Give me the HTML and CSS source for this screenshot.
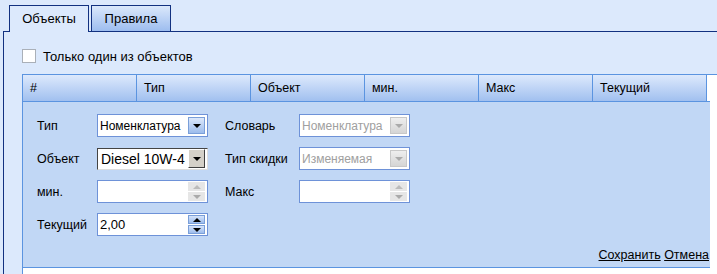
FILE: index.html
```html
<!DOCTYPE html>
<html lang="ru">
<head>
  <meta charset="UTF-8">
  <title>Объекты</title>
  <link rel="stylesheet" href="styles.css">
</head>
<body>

  <!-- Tabs -->
  <div class="tabs">
    <div class="tab active">Объекты</div>
    <div class="tab">Правила</div>
  </div>

  <div class="panel">
    <label class="check-row"><span class="checkbox"></span>Только один из объектов</label>

    <div class="grid">
      <div class="grid-head">
        <div class="hcell">#</div>
        <div class="hcell">Тип</div>
        <div class="hcell">Объект</div>
        <div class="hcell">мин.</div>
        <div class="hcell">Макс</div>
        <div class="hcell">Текущий</div>
      </div>

      <!-- Edit row -->
      <div class="edit-form">
        <div class="fields">
          <span class="lbl">Тип</span>
          <div class="combo"><span class="val">Номенклатура</span><span class="btn"><i class="arr-down"></i></span></div>
          <span class="lbl">Словарь</span>
          <div class="combo disabled"><span class="val">Номенклатура</span><span class="btn"><i class="arr-down"></i></span></div>

          <span class="lbl">Объект</span>
          <div class="combo focused"><span class="val">Diesel 10W-4</span><span class="btn"><i class="arr-down"></i></span></div>
          <span class="lbl">Тип скидки</span>
          <div class="combo disabled"><span class="val">Изменяемая</span><span class="btn"><i class="arr-down"></i></span></div>

          <span class="lbl">мин.</span>
          <div class="spin disabled"><span class="val"></span><span class="spin-btns"><span><i class="arr-up"></i></span><span><i class="arr-down"></i></span></span></div>
          <span class="lbl">Макс</span>
          <div class="spin disabled"><span class="val"></span><span class="spin-btns"><span><i class="arr-up"></i></span><span><i class="arr-down"></i></span></span></div>

          <span class="lbl">Текущий</span>
          <div class="spin"><span class="val num">2,00</span><span class="spin-btns"><span><i class="arr-up"></i></span><span><i class="arr-down"></i></span></span></div>
        </div>
        <div class="actions">
          <a href="#">Сохранить</a> <a href="#">Отмена</a>
        </div>
      </div>
    </div>
  </div>

</body>
</html>
```

FILE: styles.css
```css
body {
  margin: 0;
  background: #dce9fc;
  font-family: "Liberation Sans", Arial, sans-serif;
  font-size: 12.5px;
  color: #000;
  overflow: hidden;
  height: 274px;
}

.tabs {
  display: flex;
  gap: 2px;
  padding: 5px 0 0 9px;
  height: 26px;
  position: relative;
  z-index: 1;
}
.tab {
  width: 78px;
  height: 25px;
  line-height: 26px;
  text-align: center;
  border: 1px solid #123180;
  border-bottom: none;
  background: linear-gradient(#dbe8fb, #9dbdef);
  font-size: 13px;
}
.tab.active {
  background: #dce9fc;
  height: 26px;
}

.panel {
  border-top: 1px solid #123180;
  border-left: 1px solid #123180;
  margin-left: 3px;
  padding: 17px 0 0 18px;
  height: 230px;
}

.check-row {
  display: flex;
  align-items: center;
  gap: 7px;
  height: 14px;
  font-size: 13px;
}
.checkbox {
  width: 12px;
  height: 12px;
  border: 1px solid #aab0b8;
  background: #fff;
}

.grid {
  margin-top: 11px;
  border-top: 1px solid #5b94e0;
  border-left: 1px solid #5b94e0;
  background: #fff;
  height: 200px;
}
.grid-head {
  display: flex;
  width: 687px;
  height: 26px;
  border-bottom: 1px solid #5b94e0;
}
.hcell {
  width: 106px;
  padding-left: 7px;
  border-right: 1px solid #5b94e0;
  background: linear-gradient(#dde9fc, #a1c0ef);
  line-height: 26px;
}

.edit-form {
  width: 687px;
  height: 166px;
  background: #c1d7f5;
  border-bottom: 1px solid #5b94e0;
  padding-top: 12px;
  box-sizing: border-box;
  position: relative;
}
.fields {
  display: grid;
  grid-template-columns: 60px 111px 91px 111px;
  row-gap: 10px;
  padding-left: 14px;
  align-items: center;
}
.fields .lbl:nth-child(4n+3) {
  padding-left: 17px;
}

.combo, .spin {
  display: flex;
  height: 23px;
  border: 1px solid #6e92d8;
  background: #fff;
  box-sizing: border-box;
  align-items: center;
}
.val {
  flex: 1;
  padding-left: 2px;
  font-size: 12px;
  white-space: nowrap;
  overflow: hidden;
}
.val.num {
  font-size: 13px;
}
.combo .btn {
  width: 17px;
  height: 17px;
  margin: 0 2px 0 1px;
  border: 1px solid #7a9fd9;
  box-sizing: border-box;
  background: linear-gradient(#dce8fb, #9dbcec);
  display: flex;
  align-items: center;
  justify-content: center;
  flex: none;
}
.combo.focused {
  height: 22px;
  border: 1px solid #444;
  border-right-color: #ddd;
  border-bottom-color: #ddd;
}
.combo.focused .val {
  font-size: 14px;
  padding-left: 3px;
}
.combo.focused .btn {
  background: #d4d0c8;
  border: 1px solid #fff;
  border-right-color: #404040;
  border-bottom-color: #404040;
  height: 19px;
}
.disabled .val {
  color: #a0a0a0;
}
.combo.disabled .btn {
  background: linear-gradient(#eee, #d5d5d5);
  border-color: #c8c8c8;
}

.spin-btns {
  width: 17px;
  margin-right: 2px;
  display: flex;
  flex-direction: column;
  gap: 1px;
}
.spin-btns span {
  height: 9px;
  border: 1px solid #7a9fd9;
  box-sizing: border-box;
  background: linear-gradient(#d6e4fb, #9dbcec);
  display: flex;
  align-items: center;
  justify-content: center;
}
.spin.disabled .spin-btns span {
  background: #e6e6e6;
  border-color: #e6e6e6;
}

.arr-down, .arr-up {
  width: 0;
  height: 0;
  border-left: 4px solid transparent;
  border-right: 4px solid transparent;
}
.arr-down {
  border-top: 4px solid #000;
}
.arr-up {
  border-bottom: 4px solid #000;
}
.disabled .arr-down {
  border-top-color: #aaa;
}
.disabled .arr-up {
  border-bottom-color: #bbb;
}

.actions {
  position: absolute;
  right: 1px;
  bottom: 5px;
}
.actions a {
  color: #000;
}
```
